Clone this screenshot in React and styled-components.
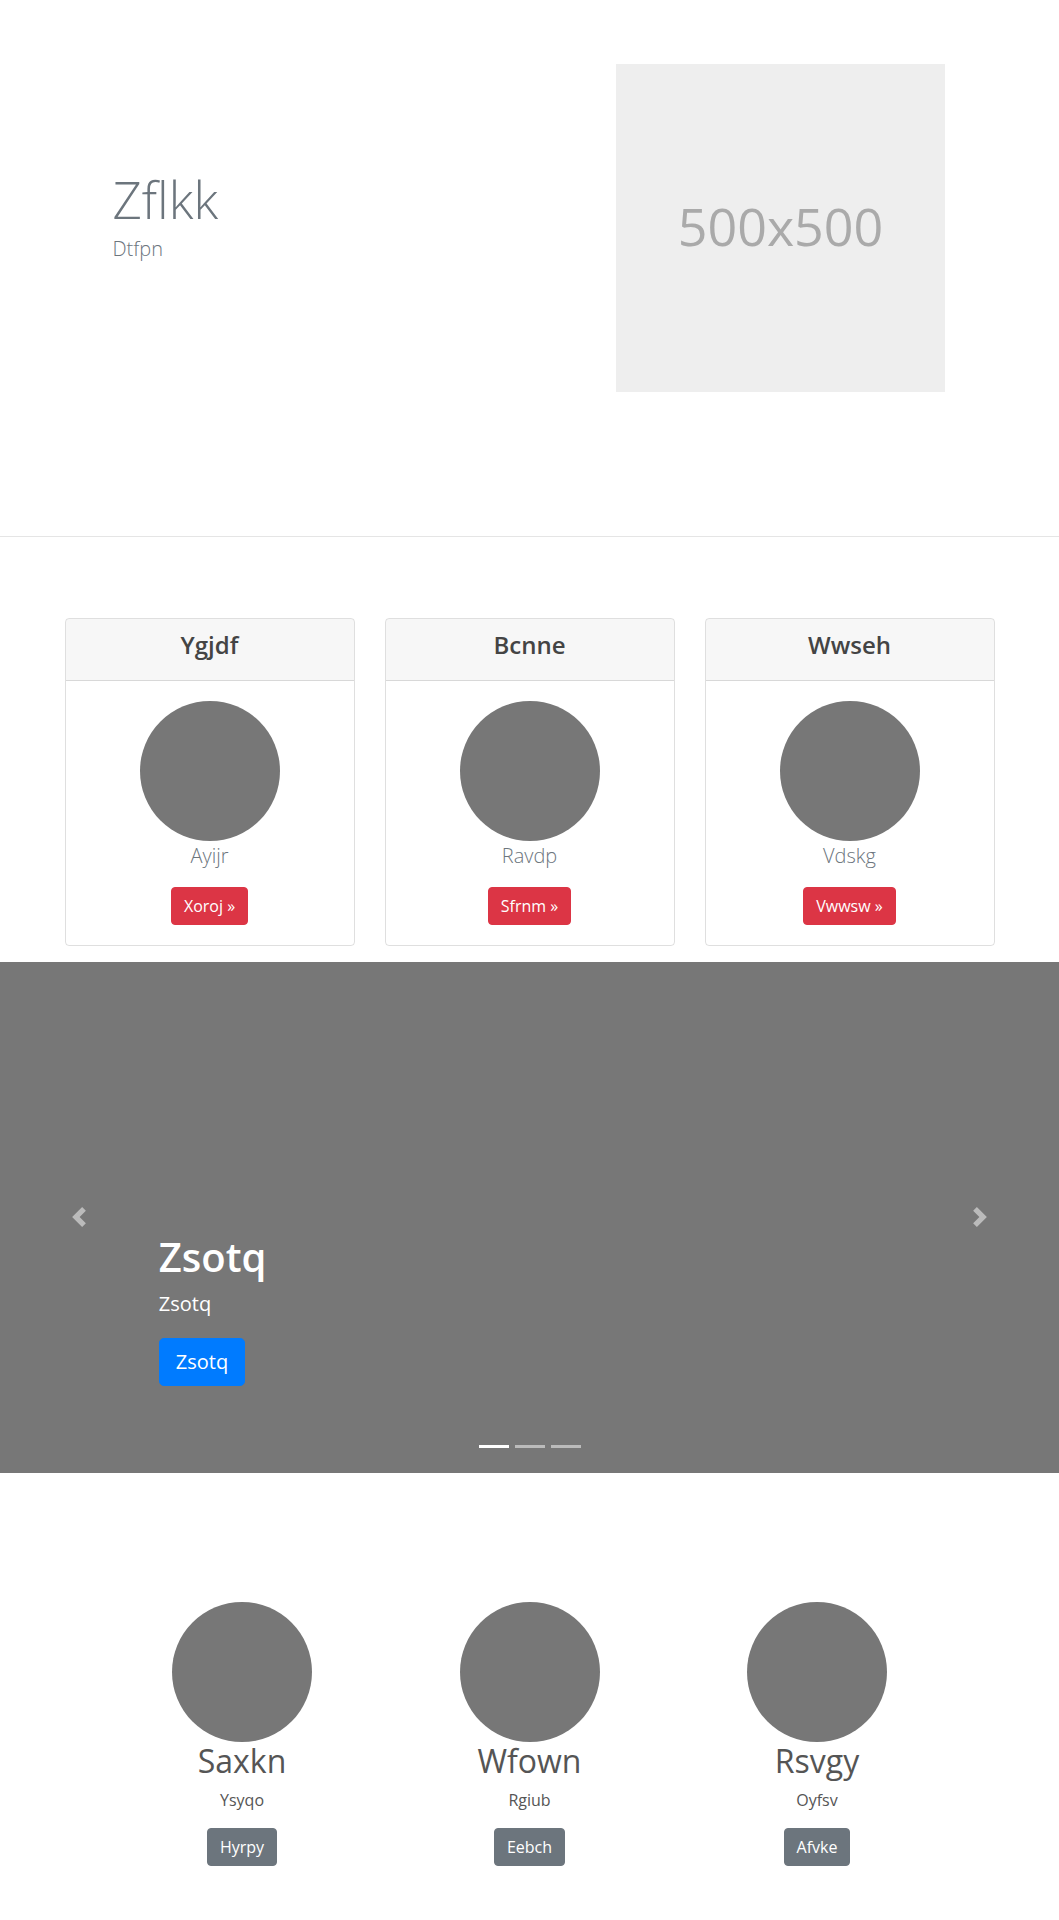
import React from "react";
import styled, { createGlobalStyle } from "styled-components";

const GlobalStyle = createGlobalStyle`
  * {
    box-sizing: border-box;
  }
  body {
    margin: 0;
    background: #fff;
    color: #212529;
    font-family: "Open Sans", Roboto, sans-serif;
    font-size: 16px;
    line-height: 1.5;
  }
`;

const cards = [
  { title: "Ygjdf", lead: "Ayijr", action: "Xoroj" },
  { title: "Bcnne", lead: "Ravdp", action: "Sfrnm" },
  { title: "Wwseh", lead: "Vdskg", action: "Vwwsw" },
];

const features = [
  { title: "Saxkn", text: "Ysyqo", action: "Hyrpy" },
  { title: "Wfown", text: "Rgiub", action: "Eebch" },
  { title: "Rsvgy", text: "Oyfsv", action: "Afvke" },
];

function App() {
  return (
    <>
      <GlobalStyle />
      <Page>
        <Hero>
          <HeroInner>
            <HeroText>
              <Display>Zflkk</Display>
              <Lead>Dtfpn</Lead>
            </HeroText>
            <HeroMedia>
              <Placeholder>500x500</Placeholder>
            </HeroMedia>
          </HeroInner>
        </Hero>
        <Divider />

        <CardDeck>
          {cards.map((c) => (
            <Card key={c.title}>
              <CardHeader>
                <CardTitle>{c.title}</CardTitle>
              </CardHeader>
              <CardBody>
                <Avatar />
                <CardLead>{c.lead}</CardLead>
                <Button $variant="danger">{c.action} &raquo;</Button>
              </CardBody>
            </Card>
          ))}
        </CardDeck>

        <Carousel>
          <Control $side="left">
            <svg width="20" height="20" viewBox="0 0 8 8" fill="#fff">
              <path d="M5.25 0l-4 4 4 4 1.5-1.5-2.5-2.5 2.5-2.5-1.5-1.5z" />
            </svg>
          </Control>
          <Caption>
            <CaptionTitle>Zsotq</CaptionTitle>
            <CaptionText>Zsotq</CaptionText>
            <CaptionAction>
              <Button $variant="primary" $large>
                Zsotq
              </Button>
            </CaptionAction>
          </Caption>
          <Control $side="right">
            <svg width="20" height="20" viewBox="0 0 8 8" fill="#fff">
              <path d="M2.75 0l-1.5 1.5 2.5 2.5-2.5 2.5 1.5 1.5 4-4-4-4z" />
            </svg>
          </Control>
          <Indicators>
            <Indicator $active />
            <Indicator />
            <Indicator />
          </Indicators>
        </Carousel>

        <Marketing>
          {features.map((f) => (
            <Feature key={f.title}>
              <Avatar />
              <FeatureTitle>{f.title}</FeatureTitle>
              <FeatureText>{f.text}</FeatureText>
              <Button $variant="secondary">{f.action}</Button>
            </Feature>
          ))}
        </Marketing>
      </Page>
    </>
  );
}

const Page = styled.div`
  width: 100%;
  min-height: 1920px;
  overflow: hidden;
`;

const Hero = styled.section`
  padding: 64px 0 144px;
`;

const HeroInner = styled.div`
  width: 960px;
  margin: 0 auto;
  display: grid;
  grid-template-columns: 1fr 1fr;
`;

const HeroText = styled.div`
  padding: 105px 0 0 63px;
`;

const Display = styled.h1`
  margin: 0 0 4px;
  font-size: 51px;
  font-weight: 300;
  line-height: 1.2;
  color: #6c757d;
`;

const Lead = styled.p`
  margin: 0;
  font-size: 20px;
  font-weight: 300;
  line-height: 1.5;
  color: #6c757d;
`;

const HeroMedia = styled.div`
  display: flex;
  justify-content: flex-end;
  padding-right: 64.5px;
`;

const Placeholder = styled.div`
  width: 329px;
  height: 328px;
  background: #eee;
  color: #aaa;
  font-size: 52px;
  display: flex;
  align-items: center;
  justify-content: center;
  padding-bottom: 4px;
`;

const Divider = styled.hr`
  margin: 0;
  border: 0;
  border-top: 1px solid #e5e5e5;
`;

const CardDeck = styled.div`
  width: 960px;
  margin: 81px auto 0;
  display: flex;
`;

const Card = styled.div`
  flex: 1;
  margin: 0 15px;
  border: 1px solid rgba(0, 0, 0, 0.125);
  border-radius: 4px;
  overflow: hidden;
  display: flex;
  flex-direction: column;
`;

const CardHeader = styled.div`
  padding: 12px 20px;
  background: rgba(0, 0, 0, 0.03);
  border-bottom: 1px solid rgba(0, 0, 0, 0.125);
  text-align: center;
`;

const CardTitle = styled.h4`
  margin: 0 0 8px;
  font-size: 24px;
  font-weight: 600;
  line-height: 1.2;
  color: #444;
`;

const CardBody = styled.div`
  padding: 20px;
  text-align: center;
`;

const Avatar = styled.div`
  width: 140px;
  height: 140px;
  border-radius: 50%;
  background: #777;
  margin: 0 auto;
`;

const CardLead = styled.p`
  margin: 0 0 16px;
  font-size: 20px;
  font-weight: 300;
  line-height: 1.5;
  color: #6c757d;
`;

const variants = {
  danger: "#dc3545",
  primary: "#007bff",
  secondary: "#6c757d",
};

const Button = styled.a`
  display: inline-block;
  padding: ${(p) => (p.$large ? "8px 16px" : "6px 12px")};
  font-size: ${(p) => (p.$large ? "20px" : "16px")};
  line-height: 1.5;
  border-radius: ${(p) => (p.$large ? "4.8px" : "4px")};
  color: #fff;
  background: ${(p) => variants[p.$variant]};
  border: 1px solid ${(p) => variants[p.$variant]};
  text-decoration: none;
  cursor: pointer;
`;

const Carousel = styled.section`
  position: relative;
  margin-top: 16px;
  height: 511px;
  background: #777;
`;

const Caption = styled.div`
  position: absolute;
  left: 15%;
  right: 15%;
  bottom: 51px;
  padding: 20px 0;
  color: #fff;
  text-align: left;
  z-index: 2;
`;

const CaptionTitle = styled.h1`
  margin: 0 0 8px;
  font-size: 40px;
  font-weight: 600;
  line-height: 1.2;
`;

const CaptionText = styled.p`
  margin: 0 0 19px;
  font-size: 20px;
  font-weight: 500;
  line-height: 1.5;
`;

const CaptionAction = styled.p`
  margin: 0 0 16px;
`;

const Control = styled.div`
  position: absolute;
  top: 0;
  bottom: 0;
  ${(p) => (p.$side === "left" ? "left: 0;" : "right: 0;")}
  width: 15%;
  display: flex;
  align-items: center;
  justify-content: center;
  opacity: 0.5;
  z-index: 1;
`;

const Indicators = styled.ol`
  position: absolute;
  left: 0;
  right: 0;
  bottom: 25px;
  margin: 0;
  padding: 0;
  list-style: none;
  display: flex;
  justify-content: center;
  gap: 6px;
  z-index: 3;
`;

const Indicator = styled.li`
  width: 30px;
  height: 3px;
  background: #fff;
  opacity: ${(p) => (p.$active ? 1 : 0.5)};
`;

const Marketing = styled.section`
  margin-top: 129px;
  display: grid;
  grid-template-columns: repeat(3, 287.5px);
  justify-content: center;
`;

const Feature = styled.div`
  text-align: center;
`;

const FeatureTitle = styled.h2`
  margin: 0 0 8px;
  font-size: 32px;
  font-weight: 400;
  line-height: 1.2;
  color: #555;
`;

const FeatureText = styled.p`
  margin: 0 0 16px;
  font-size: 16px;
  line-height: 1.5;
  color: #555;
`;

export default App;
